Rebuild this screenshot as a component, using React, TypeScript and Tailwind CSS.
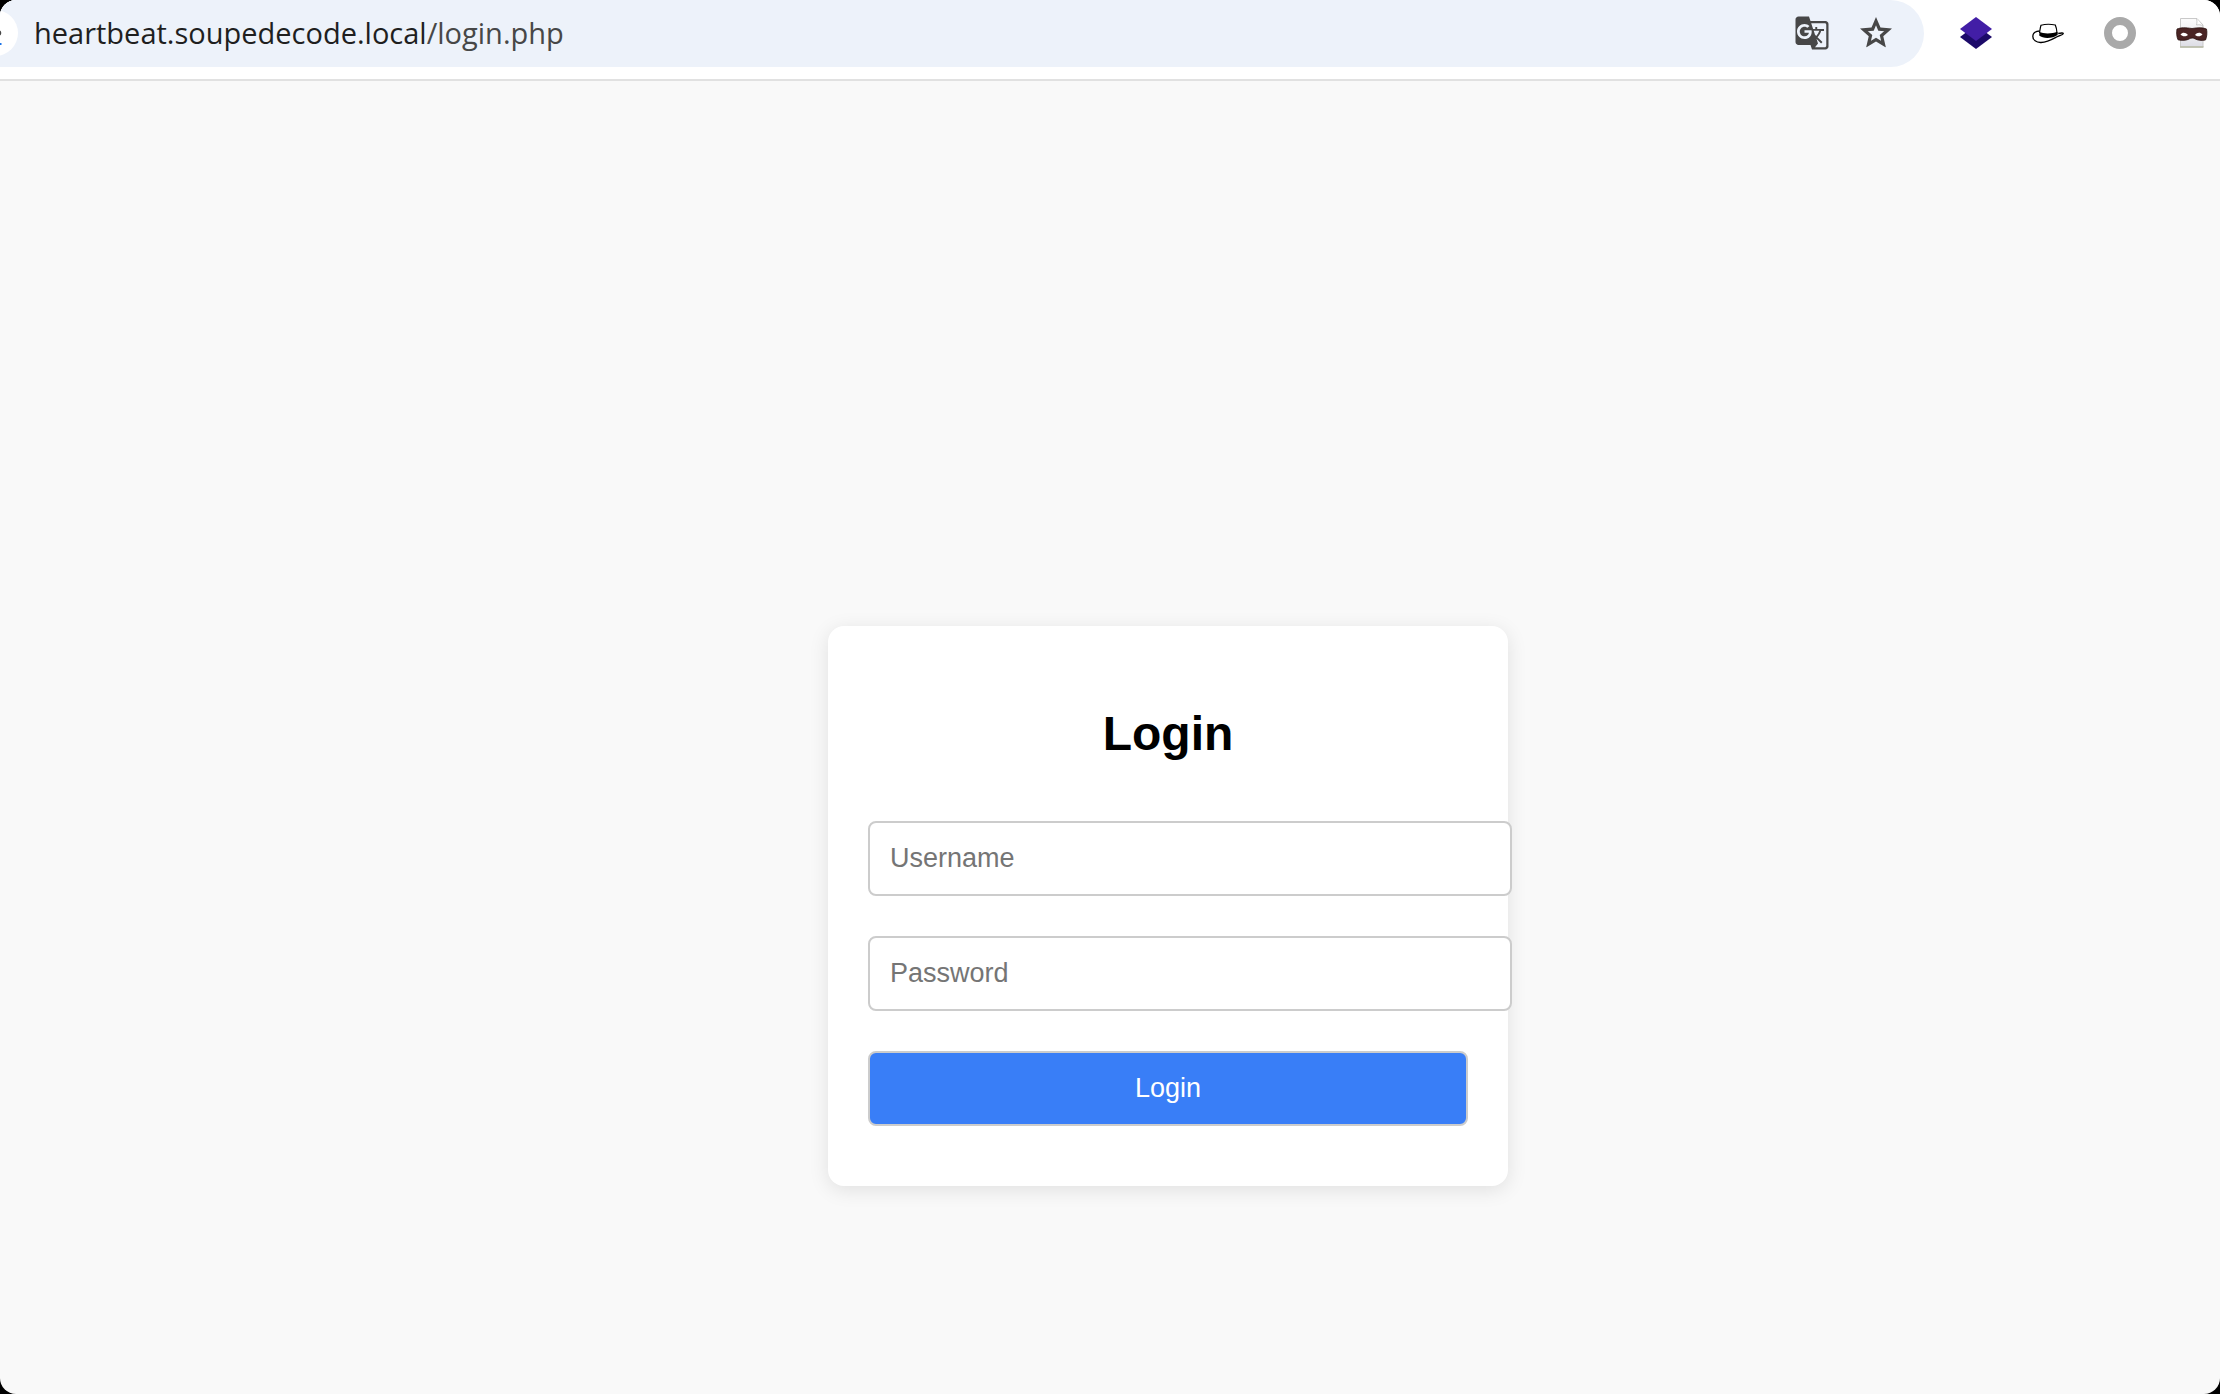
import React from 'react';
import { MdGTranslate } from 'react-icons/md';

const STAR =
  'M12 2 9.19 8.63 2 9.24l5.46 4.73L5.82 21 12 17.27 18.18 21l-1.63-7.03L22 9.24l-7.19-.61Z';

function StarIcon() {
  return (
    <svg viewBox="2 2 20 20" className="size-8" aria-hidden="true">
      <clipPath id="star-shape">
        <path d={STAR} />
      </clipPath>
      <path d={STAR} fill="none" stroke="#474747" strokeWidth="4" clipPath="url(#star-shape)" />
    </svg>
  );
}

function TuneIcon() {
  return (
    <svg viewBox="0 0 14 26" className="h-[26px] w-[14px]" fill="none" strokeWidth="2" aria-hidden="true">
      <path d="M1 13h7" stroke="#474747" />
      <circle cx="10.500" cy="13" r="1.800" stroke="#474747" />
      <path d="M2 24h11.500" stroke="#1a73e8" />
    </svg>
  );
}

function LayersIcon() {
  return (
    <svg viewBox="0 0 32 32" className="size-8" aria-hidden="true">
      <path d="M16 8 32 20 16 32 0 20Z" fill="#1c0a69" />
      <path d="M16 0 32 12 16 24 0 12Z" fill="#421ea6" />
    </svg>
  );
}

function HatIcon() {
  return (
    <svg viewBox="0 0 32 32" className="size-8" aria-hidden="true">
      <path
        d="M8 14C3 14 .8 16.5.8 19.2c0 3.800 3.400 6.500 8.200 6.300 6.200-.2 11.500-3.300 15.500-5.500 3-1.500 6.200-2 6.700-3.300.3-.9-2-.9-5-.2"
        fill="none"
        stroke="#000"
        strokeWidth="1.300"
      />
      <path d="M8.300 9.500C8 12 7.400 14 7.300 17c4 2.500 14 2.300 18 .3-.1-3-1-6-1.300-8.500" fill="#fff" />
      <path d="M7.500 15c4 2 13.500 1.800 17.500-.3.800 1 1 2 .5 3.300C21 21.500 11 22 7.200 18.500Z" fill="#000" />
      <path
        d="M7.500 16C8 13 8.300 10 9 8.300c4-1.200 10-1.200 14.300-.3.900 2 1.500 5 1.700 8"
        fill="none"
        stroke="#000"
        strokeWidth="1.200"
      />
    </svg>
  );
}

function RingIcon() {
  return (
    <svg viewBox="0 0 32 32" className="size-8" aria-hidden="true">
      <circle cx="16" cy="16" r="12" fill="none" stroke="#a9a9a9" strokeWidth="8" />
    </svg>
  );
}

function MaskIcon() {
  return (
    <svg viewBox="0 0 32 32" className="size-8" aria-hidden="true">
      <defs>
        <linearGradient id="sheet" x1="0" y1="0" x2="0" y2="1">
          <stop offset="0" stopColor="#fcfcfc" />
          <stop offset="0.700" stopColor="#e9e9ee" />
          <stop offset="1" stopColor="#dcdce4" />
        </linearGradient>
      </defs>
      <path d="M4.500 1.500H21l6 6.500v22H4.500Z" fill="url(#sheet)" stroke="#c9c9c9" />
      <path d="M20.500 1.500c.6 2 .6 4 0 6.500 2.500-.5 4.500-.3 6.500 1" fill="#fff" stroke="#bdbdbd" strokeWidth=".8" />
      <path d="M4 30h23.500" stroke="#b9bba6" strokeWidth="1.600" />
      <path
        d="M1 12c4-1.500 8-1.500 15-.5 6-1 11-1 14.500.5.800 3.500.4 8-1 11-4 .8-8 .3-10.500-1.200-1.500-1-4-1-5.500 0C10.500 23.500 6 23.800 2 22.800.6 19.500.3 15.500 1 12Z"
        fill="#4a2424"
        stroke="#2a1110"
        strokeWidth=".8"
      />
      <path d="M4.500 17.500c2-2.600 5-2.400 7.500.4-2.200 1.900-5.500 1.900-7.500-.4ZM19 17.900c2.300-2.800 5.300-3 7.500-.4-2 2.300-5.200 2.300-7.500.4Z" fill="#fff" />
    </svg>
  );
}

const extensions = [
  { label: 'Layers', Icon: LayersIcon },
  { label: 'Hat', Icon: HatIcon },
  { label: 'Ring', Icon: RingIcon },
  { label: 'Mask', Icon: MaskIcon },
];

function BrowserBar() {
  return (
    <header className="flex items-center border-b-2 border-[#e1e1e1] bg-white pr-3 pb-3">
      <div className="flex h-[67px] min-w-0 flex-1 items-center rounded-r-full bg-[#edf2fa] pr-8 pb-px">
        <button
          type="button"
          aria-label="View site information"
          className="-ml-7 flex size-[46px] shrink-0 items-center justify-center rounded-full bg-white"
        >
          <TuneIcon />
        </button>
        <div
          role="textbox"
          aria-label="Address"
          contentEditable
          suppressContentEditableWarning
          className="ml-4 min-w-0 flex-1 truncate font-['Open_Sans',sans-serif] text-[29px] leading-[38px] text-[#474747] outline-none"
        >
          <span className="text-[#1f1f1f]">heartbeat.soupedecode.local</span>/login.php
        </div>
        <div className="flex items-center gap-[30px]">
          <button type="button" aria-label="Translate this page">
            <MdGTranslate className="size-9 text-[#474747]" />
          </button>
          <button type="button" aria-label="Bookmark this tab">
            <StarIcon />
          </button>
        </div>
      </div>
      <div className="ml-9 flex items-center gap-10 pb-px">
        {extensions.map(({ label, Icon }) => (
          <button key={label} type="button" aria-label={label}>
            <Icon />
          </button>
        ))}
      </div>
    </header>
  );
}

const fieldClass =
  'block h-[75px] w-[calc(100%+44px)] rounded-lg border-2 border-[#ccc] bg-white px-5 text-[27px] text-black placeholder:text-[#757575]';

function LoginCard() {
  return (
    <form
      onSubmit={(e) => e.preventDefault()}
      className="flex w-[680px] flex-col gap-10 rounded-2xl bg-white px-10 pt-20 pb-[60px] shadow-[0_4px_20px_rgba(0,0,0,0.1)]"
    >
      <h2 className="mb-5 text-center text-5xl leading-[55px] font-bold text-black">Login</h2>
      <input type="text" aria-label="Username" placeholder="Username" className={fieldClass} />
      <input type="password" aria-label="Password" placeholder="Password" className={fieldClass} />
      <button
        type="submit"
        className="h-[75px] w-full rounded-lg border-2 border-[#ccc] bg-[#397ef7] text-[27px] text-white"
      >
        Login
      </button>
    </form>
  );
}

export default function App() {
  return (
    <div className="min-h-screen bg-black">
      <div className="flex min-h-screen flex-col overflow-hidden rounded-2xl bg-[#f9f9f9] font-['Liberation_Sans',Arial,sans-serif]">
        <BrowserBar />
        <main className="flex flex-1 items-center justify-center pt-[337px] pl-[116px]">
          <LoginCard />
        </main>
      </div>
    </div>
  );
}
